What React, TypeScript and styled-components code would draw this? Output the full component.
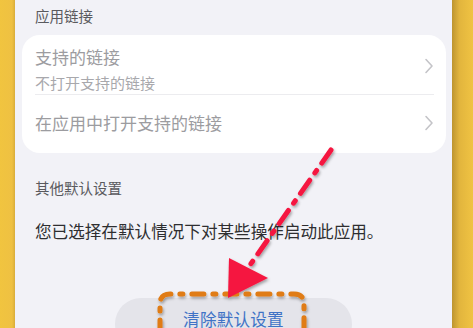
import styled, { createGlobalStyle } from 'styled-components'

const GlobalStyle = createGlobalStyle`
  html, body {
    margin: 0;
    padding: 0;
    overflow: hidden;
  }
  body {
    font-family: "Noto Sans CJK SC", "Noto Sans", sans-serif;
  }
`

const Frame = styled.div`
  position: relative;
  width: 473px;
  height: 328px;
  display: flex;
  overflow: hidden;
  background: #efc141;
`

const Bezel = styled.div<{ $side: 'left' | 'right' }>`
  width: ${(p) => (p.$side === 'left' ? '15px' : '21px')};
  flex-shrink: 0;
  background: ${(p) =>
    p.$side === 'left'
      ? 'linear-gradient(to right, #f1c43f 0%, #efc142 80%, #d9ad3a 100%)'
      : 'linear-gradient(to right, #bd9530 0%, #e2b53d 35%, #f0c343 100%)'};
`

const Screen = styled.div`
  flex: 1;
  background: #f2f2f7;
  display: flex;
  flex-direction: column;
  padding: 0 6px 0 7px;
`

const SectionLabel = styled.div<{ $top: number; $bottom: number }>`
  padding: ${(p) => p.$top}px 0 0 13px;
  margin-bottom: ${(p) => p.$bottom}px;
  font-size: 14.5px;
  line-height: 20px;
  color: #5a5a5e;
`

const Card = styled.div`
  background: #ffffff;
  border-radius: 18px;
  padding: 0 12px 0 13px;
`

const Row = styled.div<{ $height: number; $divider?: boolean }>`
  height: ${(p) => p.$height}px;
  box-sizing: border-box;
  display: flex;
  align-items: center;
  justify-content: space-between;
  padding-bottom: 3px;
  border-bottom: ${(p) => (p.$divider ? '1px solid #ececef' : 'none')};
`

const RowText = styled.div`
  display: flex;
  flex-direction: column;
  align-self: flex-start;
  padding-top: 10px;
`

const RowTitle = styled.div`
  font-size: 17px;
  line-height: 24px;
  color: #9c9ca0;
`

const RowSub = styled.div`
  font-size: 15px;
  line-height: 28px;
  color: #a8a8ac;
`

const Chevron = styled.svg<{ $shift?: number }>`
  width: 10px;
  height: 16px;
  flex-shrink: 0;
  margin-top: ${(p) => p.$shift ?? 0}px;
`

const BodyText = styled.div`
  padding: 0 0 0 13px;
  font-size: 16.6px;
  line-height: 24px;
  color: #2e2e30;
`

const ButtonWrap = styled.div`
  display: flex;
  padding-left: 93px;
  margin-top: 55px;
`

const ClearButton = styled.div`
  width: 237px;
  height: 52px;
  border-radius: 26px;
  background: #e4e4ea;
  color: #3f73c6;
  font-size: 16.6px;
  line-height: 24px;
  display: flex;
  justify-content: center;
  padding-top: 9px;
  box-sizing: border-box;
  letter-spacing: 0.2px;
`

const Overlay = styled.svg`
  position: absolute;
  left: 0;
  top: 0;
  pointer-events: none;
`

function Arrow({ shift }: { shift?: number }) {
  return (
    <Chevron viewBox="0 0 10 16" $shift={shift}>
      <path d="M2 1.5 L8 8 L2 14.5" fill="none" stroke="#c4c4c8" strokeWidth="1.6" strokeLinecap="round" strokeLinejoin="round" />
    </Chevron>
  )
}

export default function App() {
  return (
    <>
      <GlobalStyle />
      <Frame>
        <Bezel $side="left" />
        <Screen>
          <SectionLabel $top={6} $bottom={9}>应用链接</SectionLabel>
          <Card>
            <Row $height={60} $divider>
              <RowText>
                <RowTitle>支持的链接</RowTitle>
                <RowSub>不打开支持的链接</RowSub>
              </RowText>
              <Arrow shift={6} />
            </Row>
            <Row $height={58}>
              <RowTitle>在应用中打开支持的链接</RowTitle>
              <Arrow />
            </Row>
          </Card>
          <SectionLabel $top={25} $bottom={21}>其他默认设置</SectionLabel>
          <BodyText>您已选择在默认情况下对某些操作启动此应用。</BodyText>
          <ButtonWrap>
            <ClearButton>清除默认设置</ClearButton>
          </ButtonWrap>
        </Screen>
        <Bezel $side="right" />
        <Overlay width="473" height="328" viewBox="0 0 473 328">
          <defs>
            <filter id="sh" x="-20%" y="-20%" width="140%" height="140%">
              <feDropShadow dx="1" dy="2" stdDeviation="1.5" floodColor="#000" floodOpacity="0.35" />
            </filter>
          </defs>
          <g filter="url(#sh)">
            <path
              d="M160 332 L160 304 Q160 294 170 294 L294 294 Q304 294 304 304 L304 332"
              fill="none"
              stroke="#e07b12"
              strokeWidth="5"
              strokeLinecap="round"
              strokeDasharray="12 9 3 9"
            />
            <line x1="331" y1="150" x2="250" y2="265" stroke="#f5173f" strokeWidth="5" strokeLinecap="round" strokeDasharray="16 9 3 9" />
            <polygon points="228,298 229,258 268,278" fill="#f5173f" />
          </g>
        </Overlay>
      </Frame>
    </>
  )
}
